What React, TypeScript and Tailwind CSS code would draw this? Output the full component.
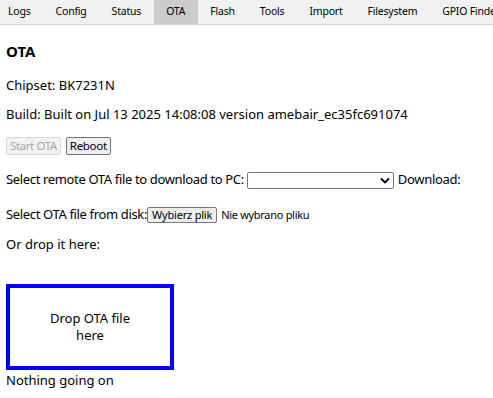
import React from "react";

const tabs = ["Logs", "Config", "Status", "OTA", "Flash", "Tools", "Import", "Filesystem", "GPIO Finder"];

export default function App() {
  return (
    <div
      className="w-[493px] h-[398px] overflow-hidden bg-white text-black"
      style={{ fontFamily: '"Noto Sans", "Open Sans", sans-serif' }}
    >
      <div className="h-[25px] flex bg-[#f1f1f1] border-b border-[#d4d4d4] whitespace-nowrap overflow-hidden">
        {tabs.map((t, i) => (
          <div
            key={t}
            className={`h-full shrink-0 flex items-center text-[10.5px] tracking-[-0.2px] ${i === 0 ? "pl-[8px] pr-[12.5px]" : "px-[12.5px]"} ${t === "OTA" ? "bg-[#cccccc]" : ""}`}
          >
            {t}
          </div>
        ))}
      </div>
      <div className="pl-[6px]">
        <div className="mt-[13px] h-[26px] flex items-center text-[15px] font-bold">OTA</div>
        <div className="mt-[7px] h-[29px] flex items-center text-[13px]">Chipset: BK7231N</div>
        <div className="h-[30px] flex items-center text-[13px] whitespace-nowrap">
          Build: Built on Jul 13 2025 14:08:08 version amebair_ec35fc691074
        </div>
        <div className="h-[31px] flex items-center gap-[5px]">
          <div className="h-[18px] px-[3px] flex items-center text-[11.5px] tracking-[-0.4px] text-[#a8a8a8] bg-[#f2f2f2] border border-[#d8d8d8] rounded-[2px]">
            Start OTA
          </div>
          <div className="h-[18px] px-[3px] flex items-center text-[11.5px] tracking-[-0.3px] bg-[#efefef] border border-[#767676] rounded-[2px]">
            Reboot
          </div>
        </div>
        <div className="h-[38px] flex items-center text-[13px] whitespace-nowrap">
          <span className="tracking-[-0.35px]">Select remote OTA file to download to PC:</span>
          <div className="ml-[3px] w-[147px] h-[17px] border border-[#767676] rounded-[2px] flex items-center justify-end pr-[3px]">
            <svg width="10" height="7" viewBox="0 0 10 7">
              <path d="M1 1.5 L5 5.5 L9 1.5" fill="none" stroke="#000" strokeWidth="1.8" />
            </svg>
          </div>
          <span className="ml-[4px] tracking-[-0.3px]">Download:</span>
        </div>
        <div className="h-[32px] flex items-center text-[13px] whitespace-nowrap">
          <span className="tracking-[-0.35px]">Select OTA file from disk:</span>
          <div className="h-[16px] px-[4px] flex items-center text-[11px] tracking-[-0.2px] bg-[#efefef] border border-[#767676] rounded-[2px]">
            Wybierz plik
          </div>
          <span className="ml-[4px] text-[11px] tracking-[-0.3px]">Nie wybrano pliku</span>
        </div>
        <div className="h-[28px] flex items-center text-[13px]">Or drop it here:</div>
        <div className="mt-[25px] w-[168px] h-[86px] border-[4px] border-[#0000ff] flex items-center justify-center text-center text-[13px] leading-[17px]">
          <div className="w-[90px]">Drop OTA file here</div>
        </div>
        <div className="h-[22px] flex items-center text-[13px]">Nothing going on</div>
      </div>
    </div>
  );
}
